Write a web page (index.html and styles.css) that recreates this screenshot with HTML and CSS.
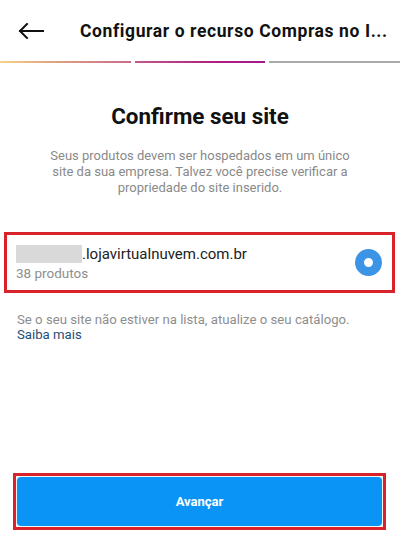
FILE: index.html
```html
<!DOCTYPE html>
<html lang="pt-BR">
<head>
<meta charset="utf-8">
<title>Configurar o recurso Compras</title>
<link rel="stylesheet" href="styles.css">
</head>
<body>
<div class="screen">
  <header class="topbar">
    <svg class="back" width="26" height="16" viewBox="0 0 26 16" aria-hidden="true">
      <path d="M25 8H2M9 1L2 8l7 7" fill="none" stroke="#111" stroke-width="2" stroke-linecap="square"/>
    </svg>
    <h1 class="title">Configurar o recurso Compras no I...</h1>
  </header>
  <div class="progress">
    <span class="seg seg-done"></span>
    <span class="seg seg-active"></span>
    <span class="seg seg-todo"></span>
  </div>
  <main class="content">
    <h2 class="heading">Confirme seu site</h2>
    <p class="desc">Seus produtos devem ser hospedados em um único site da sua empresa. Talvez você precise verificar a propriedade do site inserido.</p>
    <div class="site-option">
      <div class="site-info">
        <div class="site-url"><span class="masked"></span>.lojavirtualnuvem.com.br</div>
        <div class="site-count">38 produtos</div>
      </div>
      <span class="radio"></span>
    </div>
    <p class="note">Se o seu site não estiver na lista, atualize o seu catálogo.<br><a class="link" href="#">Saiba mais</a></p>
  </main>
  <footer class="footer">
    <div class="btn-frame">
      <button class="btn" type="button">Avançar</button>
    </div>
  </footer>
</div>
</body>
</html>
```
FILE: styles.css
```css
html, body {
  margin: 0;
  padding: 0;
  background: #fff;
}
body {
  font-family: Roboto, "Noto Sans", "Liberation Sans", sans-serif;
  color: #111;
}
.screen {
  display: flex;
  flex-direction: column;
  min-height: 543px;
}
.topbar {
  height: 61px;
  display: flex;
  align-items: center;
  padding-left: 18px;
}
.back {
  display: block;
  flex: none;
}
.title {
  margin: 0 0 0 36px;
  font-size: 17.5px;
  font-weight: 700;
  color: #111;
  white-space: nowrap;
  letter-spacing: 0.6px;
}
.progress {
  display: flex;
  gap: 4px;
  height: 2px;
}
.seg {
  flex: 1;
  display: block;
}
.seg-done {
  background: linear-gradient(90deg, #f3d48a, #e0a37f 40%, #c86a8a);
}
.seg-active {
  background: linear-gradient(90deg, #c0598a, #b0207f 60%, #a3188a);
}
.seg-todo {
  background: #a9a9a9;
}
.content {
  display: flex;
  flex-direction: column;
}
.heading {
  margin: 39px 0 0;
  text-align: center;
  font-size: 22.4px;
  line-height: 28px;
  font-weight: 700;
  color: #111;
}
.desc {
  margin: 18px 40px 0;
  text-align: center;
  font-size: 13px;
  line-height: 16px;
  color: #8a8a8a;
}
.site-option {
  margin: 36px 5px 0 4px;
  height: 61px;
  box-sizing: border-box;
  border: 3px solid #d8232b;
  display: flex;
  align-items: center;
  justify-content: space-between;
  padding: 0 10px 0 9px;
}
.site-url {
  display: flex;
  align-items: center;
  font-size: 15px;
  line-height: 20px;
  color: #222;
}
.masked {
  display: inline-block;
  width: 66px;
  height: 18px;
  background: #d9d9d9;
}
.site-count {
  margin-top: 1px;
  font-size: 13.5px;
  line-height: 17px;
  color: #8e8e8e;
}
.radio {
  width: 27px;
  height: 27px;
  border-radius: 50%;
  box-sizing: border-box;
  border: 9px solid #3b94e6;
  background: #fff;
  flex: none;
}
.note {
  margin: 19px 17px 0;
  font-size: 13.2px;
  line-height: 15px;
  color: #8e8e8e;
}
.link {
  color: #1f4e74;
  text-decoration: none;
}
.footer {
  margin-top: auto;
  padding: 0 14px 13px 13px;
}
.btn-frame {
  border: 3px solid #d8232b;
  padding: 1px;
  background: #f4f4f4;
}
.btn {
  display: block;
  width: 100%;
  height: 49px;
  border: 0;
  border-radius: 4px;
  background: #0a95f6;
  color: #fff;
  font-family: Roboto, "Noto Sans", "Liberation Sans", sans-serif;
  font-size: 13px;
  font-weight: 700;
}
```
